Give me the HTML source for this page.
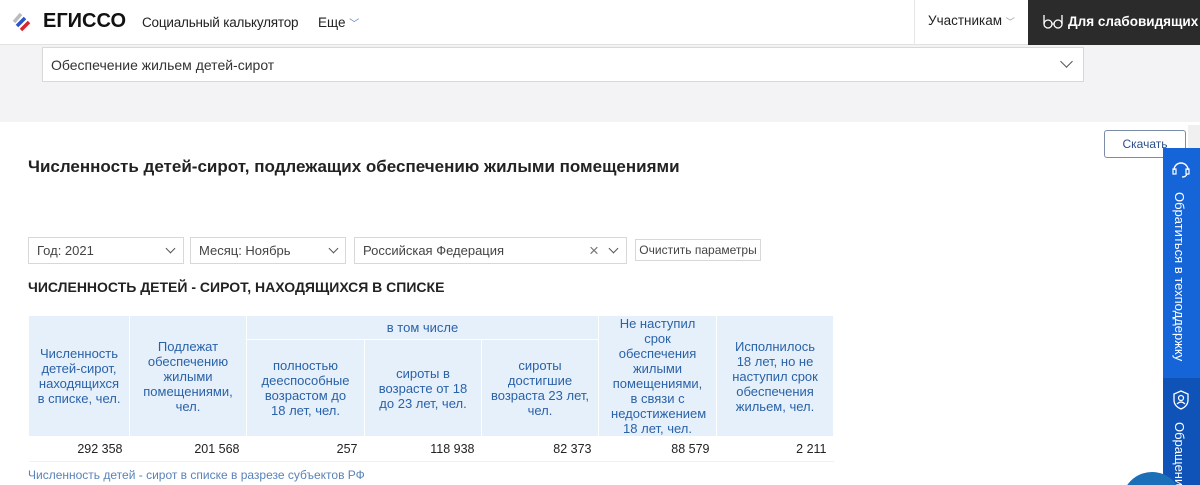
<!DOCTYPE html>
<html><head><meta charset="utf-8"><style>
*{box-sizing:border-box;margin:0;padding:0}
html,body{width:1200px;height:485px;overflow:hidden}
body{background:#fff;font-family:"Liberation Sans","DejaVu Sans",sans-serif;position:relative;color:#222}
.abs{position:absolute}
.hdr{left:0;top:0;width:1200px;height:45px;background:#fff;border-bottom:1px solid #e2e2e2}
.grey{left:0;top:45px;width:1200px;height:77px;background:#f3f3f5}
.sel{border:1px solid #d8d8d8;background:#fff;font-size:13px;color:#444;padding-left:8px;display:flex;align-items:center}
.chev{position:absolute;width:7px;height:7px;border-right:1.5px solid #555;border-bottom:1.5px solid #555;transform:rotate(45deg)}
table{border-collapse:collapse;position:absolute;left:28px;top:315px;font-size:13px;table-layout:fixed}
th{background:#e6f0fb;color:#2a62a8;font-weight:normal;border:1px solid #fff;line-height:15px;padding:0 8px}
td{text-align:right;padding:0 7px;height:25px;font-size:12.5px;border-bottom:1px solid #eef2f7}
</style></head><body>
<div class="abs hdr"></div>
<svg class="abs" style="left:12px;top:10px" width="24" height="24" viewBox="0 0 24 24"><path d="M2 12 L9 4" stroke="#bbb" stroke-width="3.5"/><path d="M5 16 L13 8" stroke="#2a56c6" stroke-width="3.5"/><path d="M9 20 L17 12" stroke="#d9262d" stroke-width="3.5"/></svg>
<div class="abs" style="left:43px;top:10px;font-size:20px;font-weight:bold;color:#111">ЕГИССО</div>
<div class="abs" style="left:142px;top:15px;font-size:13.5px;letter-spacing:-0.2px">Социальный калькулятор</div>
<div class="abs" style="left:318px;top:15px;font-size:13.5px">Еще <span style="color:#5a7fc0;font-size:10px">﹀</span></div>
<div class="abs" style="left:914px;top:0;width:1px;height:45px;background:#e6e6e6"></div>
<div class="abs" style="left:928px;top:13px;font-size:13.5px">Участникам <span style="color:#999;font-size:9px">﹀</span></div>
<div class="abs" style="left:1028px;top:0;width:172px;height:45px;background:#2b2b2b;color:#fff;font-size:13.5px;font-weight:bold;padding:14px 0 0 40px;white-space:nowrap;overflow:hidden">Для слабовидящих</div>
<svg class="abs" style="left:1042px;top:13px" width="22" height="16" viewBox="0 0 22 16"><circle cx="6" cy="11" r="4" fill="none" stroke="#fff" stroke-width="1.3"/><circle cx="16" cy="11" r="4" fill="none" stroke="#fff" stroke-width="1.3"/><path d="M2 11 L2 2 M20 11 L20 2 M10 11 h2" stroke="#fff" stroke-width="1.3" fill="none"/></svg>
<div class="abs grey"></div>
<div class="abs sel" style="left:42px;top:47px;width:1042px;height:35px;font-size:14px;color:#333">Обеспечение жильем детей-сирот</div>
<div class="chev" style="left:1062px;top:57px;width:9px;height:9px"></div>
<div class="abs" style="left:1188px;top:125px;width:12px;height:360px;background:#f0f0f0"></div>
<div class="abs" style="left:1104px;top:130px;width:82px;height:28px;border:1px solid #7a8ca8;border-radius:3px;font-size:12px;color:#2a4f8a;text-align:center;line-height:26px;background:#fff">Скачать</div>
<div class="abs" style="left:28px;top:157px;font-size:17px;font-weight:bold;color:#222">Численность детей-сирот, подлежащих обеспечению жилыми помещениями</div>
<div class="abs sel" style="left:28px;top:237px;width:156px;height:27px">Год: 2021</div><div class="chev" style="left:167px;top:245px"></div>
<div class="abs sel" style="left:190px;top:237px;width:156px;height:27px">Месяц: Ноябрь</div><div class="chev" style="left:330px;top:245px"></div>
<div class="abs sel" style="left:354px;top:237px;width:273px;height:27px">Российская Федерация</div>
<div class="abs" style="left:589px;top:241px;font-size:17px;color:#777">×</div><div class="chev" style="left:610px;top:245px"></div>
<div class="abs" style="left:635px;top:239px;width:126px;height:22px;border:1px solid #d8d8d8;font-size:12px;color:#444;text-align:center;line-height:20px">Очистить параметры</div>
<div class="abs" style="left:28px;top:279px;font-size:14px;font-weight:bold;color:#222">ЧИСЛЕННОСТЬ ДЕТЕЙ - СИРОТ, НАХОДЯЩИХСЯ В СПИСКЕ</div>
<table style="width:805px">
<colgroup><col style="width:101px"><col style="width:117px"><col style="width:118px"><col style="width:117px"><col style="width:117px"><col style="width:118px"><col style="width:117px"></colgroup>
<tr style="height:24px"><th rowspan="2">Численность детей-сирот, находящихся в списке, чел.</th><th rowspan="2">Подлежат обеспечению жилыми помещениями, чел.</th><th colspan="3">в том числе</th><th rowspan="2" style="padding:0 12px">Не наступил срок обеспечения жилыми помещениями, в связи с недостижением 18 лет, чел.</th><th rowspan="2" style="padding:0 12px">Исполнилось 18 лет, но не наступил срок обеспечения жильем, чел.</th></tr>
<tr style="height:96px"><th style="padding:0 12px">полностью дееспособные возрастом до 18 лет, чел.</th><th style="padding:0 12px">сироты в возрасте от 18 до 23 лет, чел.</th><th style="padding:0 8px">сироты достигшие возраста 23 лет, чел.</th></tr>
<tr><td>292 358</td><td>201 568</td><td>257</td><td>118 938</td><td>82 373</td><td>88 579</td><td>2 211</td></tr>
</table>
<div class="abs" style="left:28px;top:468px;font-size:12px;color:#5a82b8">Численность детей - сирот в списке в разрезе субъектов РФ</div>
<div class="abs" style="left:1163px;top:148px;width:37px;height:230px;background:#1565d8"></div>
<div class="abs" style="left:1163px;top:378px;width:37px;height:107px;background:#0f53b8"></div>
<svg class="abs" style="left:1170px;top:158px" width="22" height="22" viewBox="0 0 22 22"><path d="M4 12 A7 7 0 0 1 18 12" stroke="#fff" stroke-width="1.4" fill="none"/><rect x="3" y="11" width="3" height="5" fill="none" stroke="#fff" stroke-width="1.2"/><rect x="16" y="11" width="3" height="5" fill="none" stroke="#fff" stroke-width="1.2"/><path d="M17 16 Q16 19 12 19" stroke="#fff" stroke-width="1.2" fill="none"/></svg>
<div class="abs" style="left:1172px;top:192px;writing-mode:vertical-rl;color:#fff;font-size:13px">Обратиться в техподдержку</div>
<svg class="abs" style="left:1171px;top:389px" width="20" height="22" viewBox="0 0 20 22"><path d="M10 2 L17 5 V11 Q17 17 10 20 Q3 17 3 11 V5 Z" stroke="#fff" stroke-width="1.3" fill="none"/><circle cx="10" cy="9" r="2.5" stroke="#fff" stroke-width="1.2" fill="none"/><path d="M6 15 Q10 11 14 15" stroke="#fff" stroke-width="1.2" fill="none"/></svg>
<div class="abs" style="left:1172px;top:422px;writing-mode:vertical-rl;color:#fff;font-size:13px">Обращения</div>
<div class="abs" style="left:1122px;top:472px;width:60px;height:13px;overflow:hidden"><div style="width:60px;height:60px;border-radius:50%;background:#1a6fb8"></div></div>
</body></html>
